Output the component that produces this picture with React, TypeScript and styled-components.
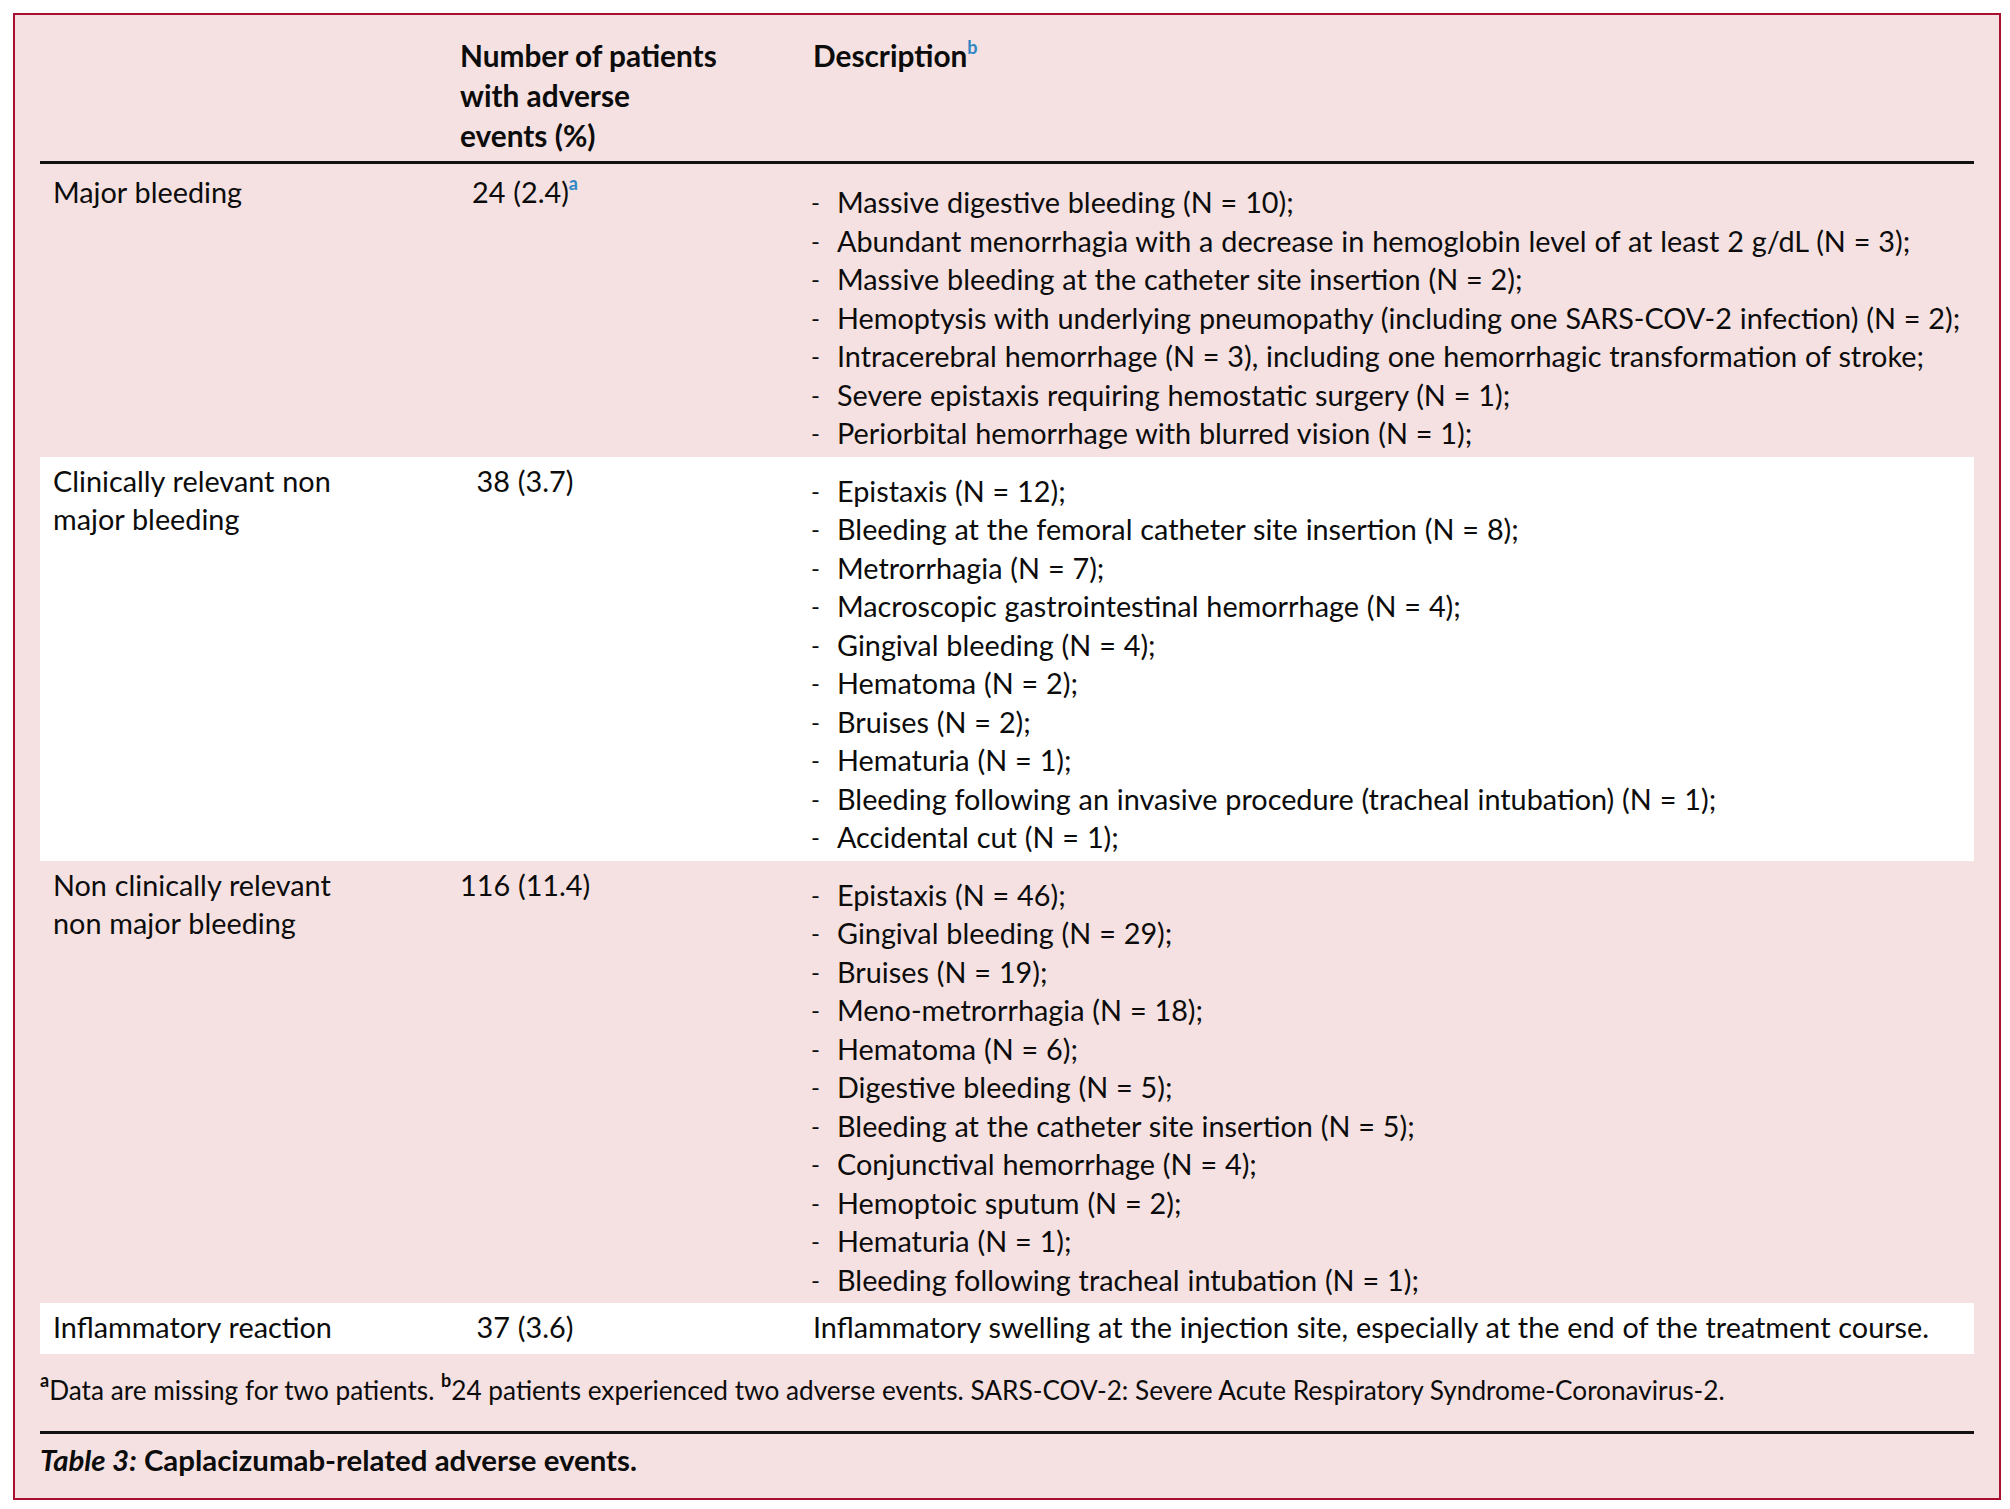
import React from "react";
import styled, { createGlobalStyle } from "styled-components";

const GlobalStyle = createGlobalStyle`
  html, body { margin: 0; padding: 0; background: #ffffff; }
  body {
    font-family: "Lato", "Liberation Sans", sans-serif;
    color: #0c0c0c;
  }
`;

const Page = styled.div`
  padding: 13px 0 0 13px;
`;

const Frame = styled.section`
  box-sizing: border-box;
  width: 1988px;
  border: 2px solid #a90f2e;
  background: #f5e1e1;
  padding: 0 25px 19px;
`;

const COLS = "420px 351px 1fr";

const HeaderRow = styled.div`
  display: grid;
  grid-template-columns: ${COLS};
  padding: 21px 0 5px;
  margin-bottom: 4px;
  border-bottom: 3px solid #111111;
  font-size: 29.8px;
  font-weight: 700;
  line-height: 40px;
`;

const HeadCell = styled.div<{ $indent?: number }>`
  padding-left: ${(p) => p.$indent ?? 0}px;
`;

const Row = styled.div<{ $tone: "pink" | "white" }>`
  display: grid;
  grid-template-columns: ${COLS};
  align-items: start;
  padding: 5px 0 4px;
  background: ${(p) => (p.$tone === "white" ? "#ffffff" : "transparent")};
  font-size: 28.8px;
  line-height: 38.5px;
  word-spacing: 0.5px;
`;

const LabelCell = styled.div`
  padding-left: 13px;
  max-width: 300px;
`;

const NumberCell = styled.div`
  display: flex;
`;

const NumberValue = styled.span`
  display: inline-block;
  width: 130px;
  text-align: center;
  white-space: nowrap;
`;

const Sup = styled.sup<{ $blue?: boolean }>`
  font-size: 18px;
  line-height: 0;
  vertical-align: 0.7em;
  color: ${(p) => (p.$blue ? "#2f86c4" : "inherit")};
  font-weight: 700;
`;

const DescList = styled.ul`
  list-style: none;
  margin: 10px 0 0;
  padding: 0;
`;

const DescItem = styled.li`
  display: flex;
  white-space: nowrap;
`;

const Dash = styled.span`
  display: inline-block;
  width: 26px;
  flex: none;
  text-align: left;
  font-size: 24px;
`;

const DescText = styled.div`
  padding: 0 0 3px 2px;
  white-space: nowrap;
`;

const Footnote = styled.p`
  margin: 17px 0 22px;
  font-size: 26.2px;
  line-height: 38px;
  white-space: nowrap;
`;

const Rule = styled.hr`
  margin: 0;
  border: none;
  height: 3px;
  background: #111111;
`;

const Caption = styled.p`
  margin: 7px 0 0;
  font-size: 29.4px;
  line-height: 38px;
  font-weight: 700;
`;

const CaptionLabel = styled.em`
  font-style: italic;
`;

type Entry = {
  label: string;
  count: string;
  countSup?: string;
  tone: "pink" | "white";
  items?: string[];
  text?: string;
};

const rows: Entry[] = [
  {
    label: "Major bleeding",
    count: "24 (2.4)",
    countSup: "a",
    tone: "pink",
    items: [
      "Massive digestive bleeding (N = 10);",
      "Abundant menorrhagia with a decrease in hemoglobin level of at least 2 g/dL (N = 3);",
      "Massive bleeding at the catheter site insertion (N = 2);",
      "Hemoptysis with underlying pneumopathy (including one SARS-COV-2 infection) (N = 2);",
      "Intracerebral hemorrhage (N = 3), including one hemorrhagic transformation of stroke;",
      "Severe epistaxis requiring hemostatic surgery (N = 1);",
      "Periorbital hemorrhage with blurred vision (N = 1);",
    ],
  },
  {
    label: "Clinically relevant non major bleeding",
    count: "38 (3.7)",
    tone: "white",
    items: [
      "Epistaxis (N = 12);",
      "Bleeding at the femoral catheter site insertion (N = 8);",
      "Metrorrhagia (N = 7);",
      "Macroscopic gastrointestinal hemorrhage (N = 4);",
      "Gingival bleeding (N = 4);",
      "Hematoma (N = 2);",
      "Bruises (N = 2);",
      "Hematuria (N = 1);",
      "Bleeding following an invasive procedure (tracheal intubation) (N = 1);",
      "Accidental cut (N = 1);",
    ],
  },
  {
    label: "Non clinically relevant non major bleeding",
    count: "116 (11.4)",
    tone: "pink",
    items: [
      "Epistaxis (N = 46);",
      "Gingival bleeding (N = 29);",
      "Bruises (N = 19);",
      "Meno-metrorrhagia (N = 18);",
      "Hematoma (N = 6);",
      "Digestive bleeding (N = 5);",
      "Bleeding at the catheter site insertion (N = 5);",
      "Conjunctival hemorrhage (N = 4);",
      "Hemoptoic sputum (N = 2);",
      "Hematuria (N = 1);",
      "Bleeding following tracheal intubation (N = 1);",
    ],
  },
  {
    label: "Inflammatory reaction",
    count: "37 (3.6)",
    tone: "white",
    text: "Inflammatory swelling at the injection site, especially at the end of the treatment course.",
  },
];

export default function App() {
  return (
    <Page>
      <GlobalStyle />
      <Frame>
        <HeaderRow>
          <HeadCell />
          <HeadCell>
            Number of patients
            <br />
            with adverse
            <br />
            events (%)
          </HeadCell>
          <HeadCell $indent={2}>
            Description<Sup $blue>b</Sup>
          </HeadCell>
        </HeaderRow>

        {rows.map((r) => (
          <Row key={r.label} $tone={r.tone}>
            <LabelCell>{r.label}</LabelCell>
            <NumberCell>
              <NumberValue>
                {r.count}
                {r.countSup && <Sup $blue>{r.countSup}</Sup>}
              </NumberValue>
            </NumberCell>
            {r.items ? (
              <DescList>
                {r.items.map((it) => (
                  <DescItem key={it}>
                    <Dash>-</Dash>
                    {it}
                  </DescItem>
                ))}
              </DescList>
            ) : (
              <DescText>{r.text}</DescText>
            )}
          </Row>
        ))}

        <Footnote>
          <Sup>a</Sup>Data are missing for two patients. <Sup>b</Sup>24 patients experienced two adverse
          events. SARS-COV-2: Severe Acute Respiratory Syndrome-Coronavirus-2.
        </Footnote>
        <Rule />
        <Caption>
          <CaptionLabel>Table 3:</CaptionLabel> Caplacizumab-related adverse events.
        </Caption>
      </Frame>
    </Page>
  );
}
